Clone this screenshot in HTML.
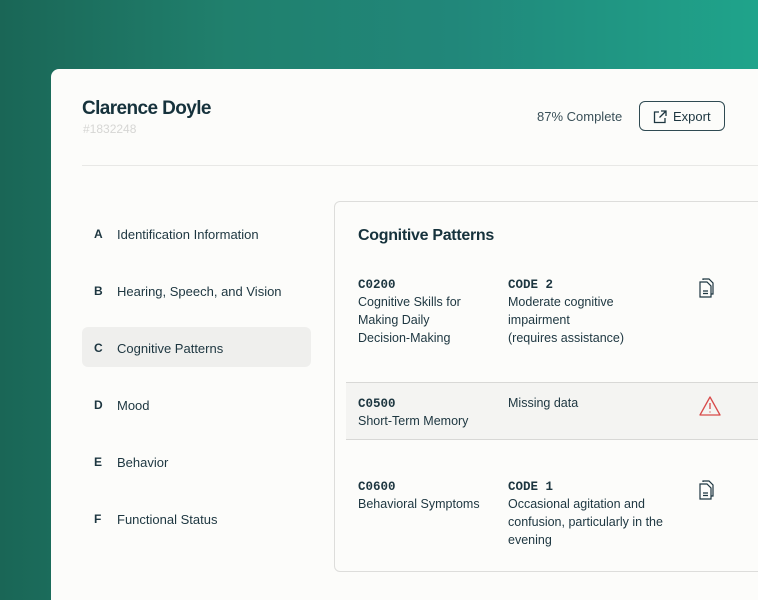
<!DOCTYPE html>
<html style="width:758px;height:600px;overflow:hidden"><head><style>
*{margin:0;padding:0;box-sizing:border-box}
body{width:758px;height:600px;overflow:hidden;font-family:"Liberation Sans",sans-serif;color:#1d3640;background:linear-gradient(90deg,#1a6656 0%,#20806d 30%,#21877a 60%,#1fa48b 100%);position:relative;border-radius:8px 8px 0 0}
.card{position:absolute;left:51px;top:69px;width:720px;height:540px;background:#fcfcfa;border-radius:8px}
.abs{position:absolute}
.name{left:31px;top:29px;font-size:19px;font-weight:bold;letter-spacing:-0.6px;color:#16323c}
.id{left:32px;top:53px;font-size:12px;color:#d6d6d4}
.hr{left:31px;top:96px;width:700px;height:1px;background:#e8e8e6}
.pct{left:486px;top:40px;font-size:13px;color:#3a5058}
.btn{left:588px;top:32px;width:86px;height:30px;border:1.3px solid #2f4a52;border-radius:6px;font-size:13px;color:#1d3640}
.nav{left:31px;width:229px;height:40px;border-radius:6px;font-size:13px}
.nav b{position:absolute;left:12px;top:14px;font-size:12px}
.nav span{position:absolute;left:35px;top:14px}
.panel{left:283px;top:132px;width:460px;height:371px;border:1px solid #dddddb;border-radius:6px;background:#fcfcfa}
.mono{font-family:"Liberation Mono",monospace;font-weight:bold;font-size:12.5px;color:#1d3640}
.t{font-size:12.5px;line-height:18px;color:#1d3640}
</style></head><body>
<div class="card">
<div class="abs name">Clarence Doyle</div>
<div class="abs id">#1832248</div>
<div class="abs pct">87% Complete</div>
<div class="abs btn"><svg class="abs" style="left:13px;top:8px" width="14" height="14" viewBox="0 0 14 14" fill="none" stroke="#1d3640" stroke-width="1.3"><path d="M6 2H1.5v10.5H12V8"/><path d="M8 1h5v5M13 1L6.5 7.5"/></svg><span class="abs" style="left:33px;top:7px">Export</span></div>
<div class="abs hr"></div>

<div class="abs nav" style="top:144px"><b>A</b><span>Identification Information</span></div>
<div class="abs nav" style="top:201px"><b>B</b><span>Hearing, Speech, and Vision</span></div>
<div class="abs nav" style="top:258px;background:#efefed"><b>C</b><span>Cognitive Patterns</span></div>
<div class="abs nav" style="top:315px"><b>D</b><span>Mood</span></div>
<div class="abs nav" style="top:372px"><b>E</b><span>Behavior</span></div>
<div class="abs nav" style="top:429px"><b>F</b><span>Functional Status</span></div>

<div class="abs panel">
<div class="abs" style="left:23px;top:25px;font-size:16px;font-weight:bold;letter-spacing:-0.3px;color:#16323c">Cognitive Patterns</div>

<div class="abs mono" style="left:23px;top:76px">C0200</div>
<div class="abs t" style="left:23px;top:91px;width:130px">Cognitive Skills for<br>Making Daily<br>Decision-Making</div>
<div class="abs mono" style="left:173px;top:76px">CODE 2</div>
<div class="abs t" style="left:173px;top:91px">Moderate cognitive<br>impairment<br>(requires assistance)</div>
<svg class="abs" style="left:362px;top:75px" width="20" height="22" viewBox="0 0 20 22" fill="none" stroke="#1d3640" stroke-width="1.2"><path d="M6 3V2h6l4 4v11h-2"/><path d="M3 5h7l4 4v11H3z"/><path d="M6 14h5M6 16.5h5"/></svg>

<div class="abs" style="left:11px;top:180px;width:460px;height:58px;background:#f4f4f2;border-top:1px solid #d8d8d6;border-bottom:1px solid #d8d8d6"></div>
<div class="abs mono" style="left:23px;top:195px">C0500</div>
<div class="abs t" style="left:23px;top:210px">Short-Term Memory</div>
<div class="abs t" style="left:173px;top:192px">Missing data</div>
<svg class="abs" style="left:363px;top:193px" width="24" height="22" viewBox="0 0 24 22" fill="none" stroke="#d84a4a" stroke-width="1.3"><path d="M12 2L22 20H2z" stroke-linejoin="round"/><path d="M12 8v6M12 16.5v1"/></svg>

<div class="abs mono" style="left:23px;top:278px">C0600</div>
<div class="abs t" style="left:23px;top:293px">Behavioral Symptoms</div>
<div class="abs mono" style="left:173px;top:278px">CODE 1</div>
<div class="abs t" style="left:173px;top:293px">Occasional agitation and<br>confusion, particularly in the<br>evening</div>
<svg class="abs" style="left:362px;top:277px" width="20" height="22" viewBox="0 0 20 22" fill="none" stroke="#1d3640" stroke-width="1.2"><path d="M6 3V2h6l4 4v11h-2"/><path d="M3 5h7l4 4v11H3z"/><path d="M6 14h5M6 16.5h5"/></svg>
</div>
</div>
</body></html>
